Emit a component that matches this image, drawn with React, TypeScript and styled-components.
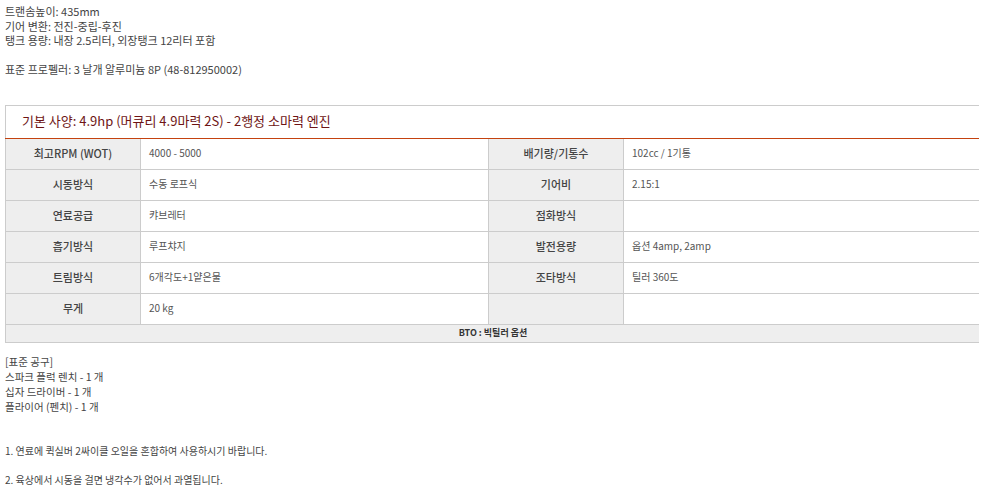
import styled, { createGlobalStyle } from "styled-components";

const GlobalStyle = createGlobalStyle`
  body {
    margin: 4px 5px;
    background: #fff;
    font-family: "Noto Sans CJK KR", "Noto Sans", sans-serif;
    font-size: 11px;
    line-height: 14.5px;
    color: #444;
  }
`;

const specs = [
  ["최고RPM (WOT)", "4000 - 5000", "배기량/기통수", "102cc / 1기통"],
  ["시동방식", "수동 로프식", "기어비", "2.15:1"],
  ["연료공급", "캬브레터", "점화방식", ""],
  ["흡기방식", "루프챠지", "발전용량", "옵션 4amp, 2amp"],
  ["트림방식", "6개각도+1얕은물", "조타방식", "틸러 360도"],
  ["무게", "20 kg", "", ""],
];

const App = () => {
  return (
    <>
      <GlobalStyle />
      <Block>
        <Line>트랜솜높이: 435mm</Line>
        <Line>기어 변환: 전진-중립-후진</Line>
        <Line>탱크 용량: 내장 2.5리터, 외장탱크 12리터 포함</Line>
        <Blank />
        <Line>표준 프로펠러: 3 날개 알루미늄 8P (48-812950002)</Line>
      </Block>

      <SpecTable>
        <colgroup>
          <col style={{ width: 135 }} />
          <col style={{ width: 348 }} />
          <col style={{ width: 135 }} />
          <col />
        </colgroup>
        <thead>
          <tr>
            <TitleCell colSpan={4}>
              기본 사양: 4.9hp (머큐리 4.9마력 2S) - 2행정 소마력 엔진
            </TitleCell>
          </tr>
        </thead>
        <tbody>
          {specs.map((row, i) => (
            <tr key={i}>
              <Label>{row[0]}</Label>
              <Value>{row[1]}</Value>
              <Label>{row[2]}</Label>
              <Value>{row[3]}</Value>
            </tr>
          ))}
          <tr>
            <Note colSpan={4}>BTO : 빅틸러 옵션</Note>
          </tr>
        </tbody>
      </SpecTable>

      <Tools>
        <ToolLine>[표준 공구]</ToolLine>
        <ToolLine>스파크 플럭 렌치 - 1 개</ToolLine>
        <ToolLine>십자 드라이버 - 1 개</ToolLine>
        <ToolLine>플라이어 (펜치) - 1 개</ToolLine>
        <Blank />
        <Blank />
        <Small>1. 연료에 퀵실버 2싸이클 오일을 혼합하여 사용하시기 바랍니다.</Small>
        <Blank />
        <Small>2. 육상에서 시동을 걸면 냉각수가 없어서 과열됩니다.</Small>
      </Tools>
    </>
  );
};

const Block = styled.div`
  display: flex;
  flex-direction: column;
`;

const Line = styled.div`
  height: 14.5px;
  white-space: nowrap;
`;

const Blank = styled.div`
  height: 14.5px;
`;

const ToolLine = styled(Line)`
  height: 15px;
  font-size: 10.5px;
`;

const Small = styled(Line)`
  font-size: 10px;
`;

const SpecTable = styled.table`
  width: 976px;
  margin-top: 28px;
  border-collapse: collapse;
  table-layout: fixed;
`;

const TitleCell = styled.th`
  height: 32px;
  padding: 0 0 0 16px;
  text-align: left;
  font-weight: normal;
  font-size: 13px;
  color: #6e1414;
  border: 1px solid #cccccc;
  border-bottom: 1px solid #c4420f;
`;

const Label = styled.td`
  height: 30px;
  padding: 0;
  background: #eeeeee;
  border: 1px solid #cccccc;
  border-top: none;
  text-align: center;
  font-weight: 500;
  color: #444;
`;

const Value = styled.td`
  height: 30px;
  padding: 0 0 0 8px;
  background: #fff;
  border: 1px solid #cccccc;
  border-top: none;
  font-size: 10px;
  color: #555;
`;

const Note = styled.td`
  height: 17px;
  padding: 0;
  background: #eeeeee;
  border: 1px solid #cccccc;
  border-top: none;
  text-align: center;
  font-size: 9px;
  font-weight: bold;
  color: #333;
`;

const Tools = styled.div`
  display: flex;
  flex-direction: column;
  margin-top: 12px;
`;

export default App;
